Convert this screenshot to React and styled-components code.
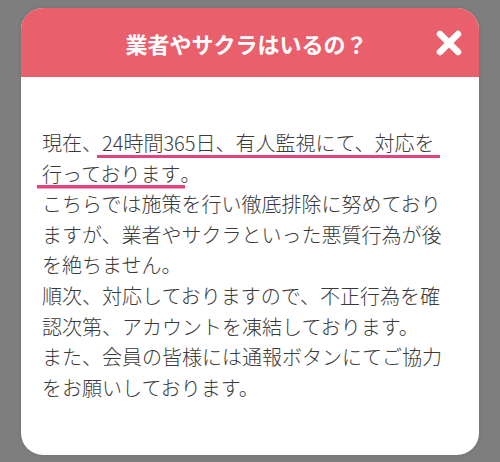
import React from "react";
import styled, { createGlobalStyle } from "styled-components";

const Global = createGlobalStyle`
  html, body {
    margin: 0;
    padding: 0;
    background: #7e7e7e;
  }
  body {
    font-family: "Noto Sans CJK JP", "Noto Sans", sans-serif;
  }
`;

const Page = styled.div`
  width: 500px;
  height: 462px;
  padding: 8px 21px 0;
  box-sizing: border-box;
  background: #7e7e7e;
`;

const Modal = styled.div`
  width: 458px;
  background: #ffffff;
  border-radius: 22px;
  overflow: hidden;
  box-shadow: 0 0 4px rgba(0, 0, 0, 0.12);
`;

const Header = styled.div`
  height: 69px;
  background: #e9606c;
  display: flex;
  align-items: center;
  padding: 0 17px 0 10px;
  box-sizing: border-box;
`;

const Spacer = styled.div`
  width: 26px;
  flex: none;
`;

const Title = styled.h2`
  flex: 1;
  margin: 0;
  text-align: center;
  color: #ffffff;
  font-size: 22px;
  font-weight: 700;
  line-height: 1;
  font-family: "Noto Sans CJK JP", sans-serif;
`;

const Close = styled.button`
  width: 26px;
  height: 26px;
  padding: 0;
  border: 0;
  background: none;
  display: flex;
  align-items: center;
  justify-content: center;
  cursor: pointer;
  flex: none;
`;

const Body = styled.div`
  padding: 51px 32px 52px 21px;
`;

const Para = styled.p`
  margin: 0;
  width: 405px;
  font-size: 20px;
  line-height: 30.6px;
  color: #3a3a3a;
  font-weight: 300;
  font-family: "Noto Sans CJK JP", sans-serif;
`;

const Mark = styled.span`
  padding: 0 5px 1px;
  margin: 0 -5px;
  -webkit-box-decoration-break: clone;
  box-decoration-break: clone;
  background: linear-gradient(#e4437d, #e4437d) 0 100% / 100% 3.5px no-repeat;
`;

export default function App() {
  return (
    <>
      <Global />
      <Page>
        <Modal>
          <Header>
            <Spacer />
            <Title>業者やサクラはいるの？</Title>
            <Close aria-label="閉じる">
              <svg width="26" height="26" viewBox="0 0 26 26">
                <path
                  d="M4 4 L22 22 M22 4 L4 22"
                  stroke="#ffffff"
                  strokeWidth="6.5"
                  strokeLinecap="round"
                  fill="none"
                />
              </svg>
            </Close>
          </Header>
          <Body>
            <Para>
              現在、<Mark>24時間365日、有人監視にて、対応を行っております</Mark>。
            </Para>
            <Para>こちらでは施策を行い徹底排除に努めておりますが、業者やサクラといった悪質行為が後を絶ちません。</Para>
            <Para>順次、対応しておりますので、不正行為を確認次第、アカウントを凍結しております。</Para>
            <Para>また、会員の皆様には通報ボタンにてご協力をお願いしております。</Para>
          </Body>
        </Modal>
      </Page>
    </>
  );
}
